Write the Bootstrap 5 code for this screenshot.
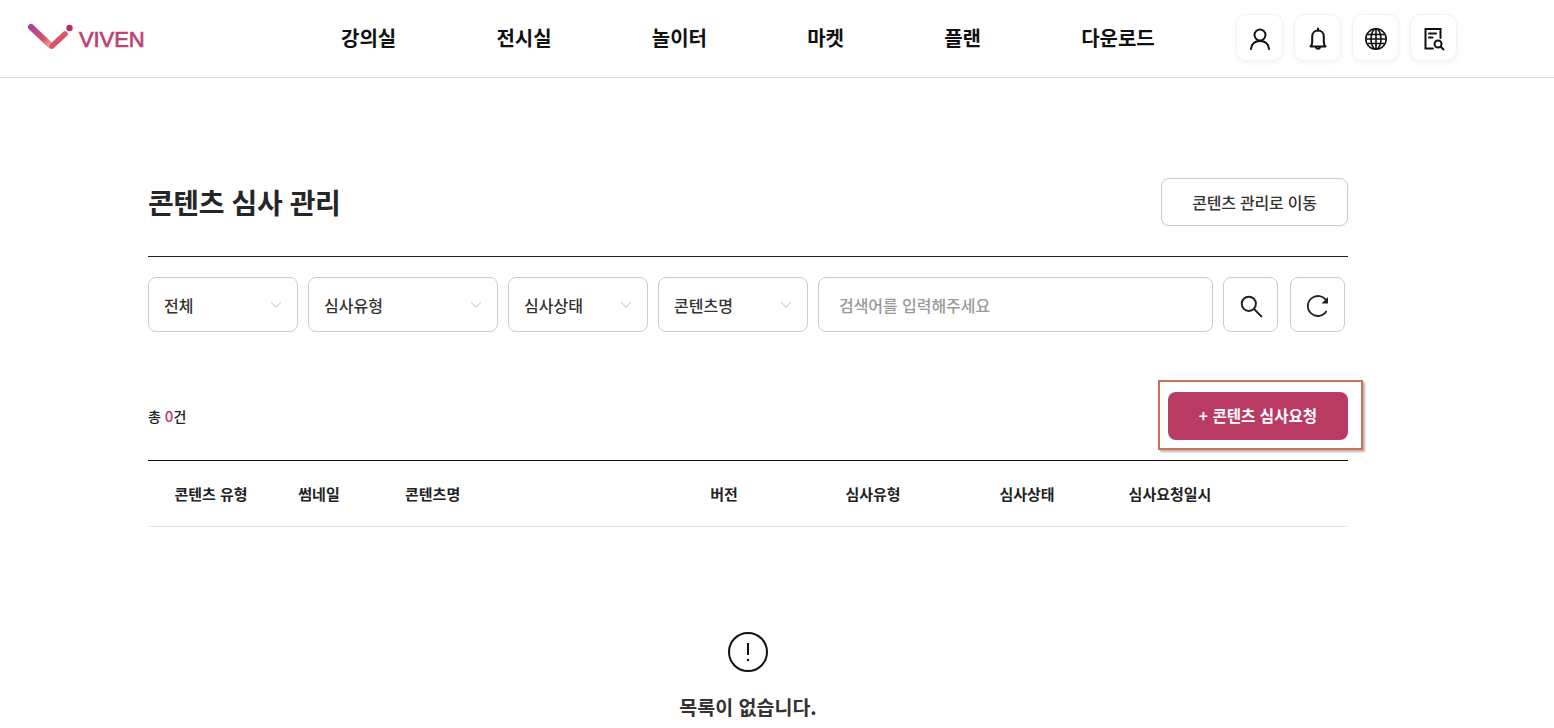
<!DOCTYPE html>
<html lang="ko">
<head>
<meta charset="utf-8">
<title>콘텐츠 심사 관리</title>
<link href="https://cdn.jsdelivr.net/npm/bootstrap@5.3.0/dist/css/bootstrap.min.css" rel="stylesheet">
<style>
html,body{height:728px;overflow:hidden}
body{font-family:"Noto Sans CJK KR","Noto Sans",sans-serif;color:#222;background:#fff}
.top-bar{height:78px;border-bottom:1px solid #d9d9d9;padding-left:27px}
.brand-link{width:118px;height:30px;margin-top:-2px;text-decoration:none}
.brand-name{font-family:"Liberation Sans",sans-serif;font-size:22px;font-weight:400;color:#bb4472;letter-spacing:-.1px;-webkit-text-stroke:.7px #bb4472;line-height:1;margin-left:6px;margin-top:4px}
.menu-row{margin-left:196px;gap:100.200px;width:813px}
.menu-row a{font-size:20px;font-weight:700;color:#111;text-decoration:none;white-space:nowrap;line-height:1;margin-top:-2px}
.tool-row{margin-left:82px;gap:11px;margin-top:-2px}
.tool-btn{width:47px;height:47px;border:1px solid #f3f3f3;border-radius:10px;background:#fff;box-shadow:0 2px 5px rgba(0,0,0,.05);padding:0}
.page-wrap{width:1200px;margin-left:148px}
.head-row{height:179px;padding-top:100px;border-bottom:1px solid #222}
.page-title{font-size:28px;font-weight:700;line-height:1;color:#262626;margin:0;padding-top:10px;letter-spacing:-.4px}
.move-btn{width:187px;height:48px;font-size:16px;font-weight:500;color:#333;border:1px solid #ccc;border-radius:8px;background:#fff;padding:0;letter-spacing:-.2px;box-shadow:0 1px 2px rgba(0,0,0,.04)}
.filter-row{margin-top:20px;gap:10px;height:55px}
.pick-box{height:55px;border:1px solid #ccc;border-radius:8px;padding:0 15px;font-size:16px;font-weight:500;color:#333;background:#fff}
.w-150{width:150px}.w-190{width:190px}.w-140{width:140px}
.search-field{width:395px;height:55px;border:1px solid #ccc;border-radius:8px;padding:0 20px;font-size:16px;font-weight:500;font-family:inherit;outline:0;letter-spacing:-.05px}
.search-field::placeholder{color:#999;opacity:1}
.square-btn{width:55px;height:55px;border:1px solid #ccc;border-radius:8px;background:#fff;padding:0}
.reset-btn{margin-left:2px}
.count-row{height:129px;padding-bottom:20px;border-bottom:1px solid #111}
.count-text{font-size:14px;font-weight:500;color:#222;padding-bottom:13px;line-height:21px}
.count-num{color:#bb3a63;font-size:15px}
.add-wrap{position:relative}
.add-btn{width:180px;height:48px;background:#b93a62;border:0;border-radius:8px;color:#fff;font-size:15.600px;font-weight:700;padding:0}
.add-wrap::after{content:"";position:absolute;left:-10px;right:-15px;top:-12px;bottom:-10px;border:2px solid #c8735a;box-shadow:2px 2px 2px rgba(90,60,50,.4);pointer-events:none}
.list-table{table-layout:fixed;width:1200px;margin:0}
.list-table th{height:65px;font-size:15px;font-weight:700;color:#222;text-align:center;vertical-align:middle;padding:1px 0 0;border-bottom:1px solid #e5e5e5;white-space:nowrap}
.list-table th.name-col{text-align:left;padding-left:41px}
.empty-box{margin-top:105px}
.empty-text{font-size:19.500px;font-weight:700;color:#333;line-height:1;margin-top:25px}
</style>
</head>
<body>
<header class="top-bar d-flex align-items-center">
  <a class="brand-link d-flex align-items-center" href="#">
    <svg width="46" height="30" viewBox="0 0 46 30" fill="none">
      <defs><linearGradient id="lg" gradientUnits="userSpaceOnUse" x1="2" y1="3" x2="25" y2="25"><stop offset="0" stop-color="#a5409a"/><stop offset=".6" stop-color="#d94f66"/><stop offset="1" stop-color="#f5bda8"/></linearGradient></defs>
      <path d="M4 4 L24 23" stroke="url(#lg)" stroke-width="6" stroke-linecap="round"/>
      <path d="M25 23 L38 11" stroke="#d9536a" stroke-width="5.500" stroke-linecap="round"/>
      <circle cx="42.500" cy="5" r="3.200" fill="#b8305f"/>
    </svg>
    <span class="brand-name">VIVEN</span>
  </a>
  <nav class="menu-row d-flex align-items-center">
    <a href="#">강의실</a><a href="#">전시실</a><a href="#">놀이터</a><a href="#">마켓</a><a href="#">플랜</a><a href="#">다운로드</a>
  </nav>
  <div class="tool-row d-flex">
    <button class="tool-btn" type="button" aria-label="사용자"><svg width="24" height="24" viewBox="0 0 24 24" fill="none" stroke="#111" stroke-width="2" stroke-linecap="round"><circle cx="12" cy="8" r="5.500"/><path d="M3 22c.6-5 3.400-8 9-8s8.400 3 9 8"/></svg></button>
    <button class="tool-btn" type="button" aria-label="알림"><svg width="24" height="24" viewBox="0 0 24 24" fill="none" stroke="#111" stroke-width="2" stroke-linejoin="round" stroke-linecap="round"><path d="M4.500 19.500h15c-1.300-1-1.700-2.500-1.700-4.500V9.500C17.800 6 15.300 3.500 12 3.500S6.200 6 6.200 9.500V15c0 2-.4 3.500-1.700 4.500Z"/><path d="M10 20.500c.3 1.500 3.700 1.500 4 0M12 1.500v2"/></svg></button>
    <button class="tool-btn" type="button" aria-label="언어"><svg width="24" height="24" viewBox="0 0 24 24" fill="none" stroke="#111" stroke-width="1.600"><circle cx="12" cy="12" r="10.200"/><ellipse cx="12" cy="12" rx="5" ry="10.200"/><path d="M12 2v20M2 12h20M3.500 7.500h17M3.500 16.500h17"/></svg></button>
    <button class="tool-btn" type="button" aria-label="심사 조회"><svg width="24" height="24" viewBox="0 0 24 24" fill="none" stroke="#111" stroke-width="2" stroke-linecap="round"><path d="M11 21.500H3.500V2h15v9"/><path d="M7 6.500h7M7 10.500h3.500"/><circle cx="16" cy="17" r="3.500"/><path d="m18.800 19.800 2.700 2.700"/></svg></button>
  </div>
</header>
<main class="page-wrap">
  <div class="head-row d-flex justify-content-between align-items-start">
    <h1 class="page-title">콘텐츠 심사 관리</h1>
    <button class="move-btn" type="button">콘텐츠 관리로 이동</button>
  </div>
  <div class="filter-row d-flex">
    <div class="pick-box w-150 d-flex align-items-center justify-content-between">전체<svg width="12" height="8" viewBox="0 0 12 8" fill="none" stroke="#c4c4c4"><path d="m1 1 5 5.500L11 1"/></svg></div>
    <div class="pick-box w-190 d-flex align-items-center justify-content-between">심사유형<svg width="12" height="8" viewBox="0 0 12 8" fill="none" stroke="#c4c4c4"><path d="m1 1 5 5.500L11 1"/></svg></div>
    <div class="pick-box w-140 d-flex align-items-center justify-content-between">심사상태<svg width="12" height="8" viewBox="0 0 12 8" fill="none" stroke="#c4c4c4"><path d="m1 1 5 5.500L11 1"/></svg></div>
    <div class="pick-box w-150 d-flex align-items-center justify-content-between">콘텐츠명<svg width="12" height="8" viewBox="0 0 12 8" fill="none" stroke="#c4c4c4"><path d="m1 1 5 5.500L11 1"/></svg></div>
    <input class="search-field" type="text" placeholder="검색어를 입력해주세요">
    <button class="square-btn" type="button" aria-label="검색"><svg width="24" height="24" viewBox="0 0 22 22" fill="none" stroke="#222" stroke-width="1.800" stroke-linecap="round"><circle cx="9" cy="9" r="6.500"/><path d="m14 14 6.500 6.500"/></svg></button>
    <button class="square-btn reset-btn" type="button" aria-label="초기화"><svg width="24" height="24" viewBox="0 0 24 24" fill="none" stroke="#222" stroke-width="1.800"><path d="M20.500 7A10 10 0 1 0 20.500 17"/><path d="M22 3v6.500h-6.500Z" fill="#222" stroke="none"/></svg></button>
  </div>
  <div class="count-row d-flex justify-content-between align-items-end">
    <div class="count-text">총 <span class="count-num">0</span>건</div>
    <div class="add-wrap"><button class="add-btn" type="button">+ 콘텐츠 심사요청</button></div>
  </div>
  <table class="list-table">
    <colgroup><col style="width:126px"><col style="width:90px"><col style="width:288px"><col style="width:144px"><col style="width:154px"><col style="width:154px"><col style="width:132px"><col style="width:112px"></colgroup>
    <thead><tr><th>콘텐츠 유형</th><th>썸네일</th><th class="name-col">콘텐츠명</th><th>버전</th><th>심사유형</th><th>심사상태</th><th>심사요청일시</th><th></th></tr></thead>
  </table>
  <div class="empty-box d-flex flex-column align-items-center">
    <svg width="40" height="40" viewBox="0 0 40 40" fill="none" stroke="#111" stroke-width="2"><circle cx="20" cy="20" r="19"/><path d="M20 11v12"/><circle cx="20" cy="28" r="1.200" fill="#111" stroke="none"/></svg>
    <p class="empty-text mb-0">목록이 없습니다.</p>
  </div>
</main>
<script src="https://cdn.jsdelivr.net/npm/bootstrap@5.3.0/dist/js/bootstrap.bundle.min.js"></script>
</body>
</html>
